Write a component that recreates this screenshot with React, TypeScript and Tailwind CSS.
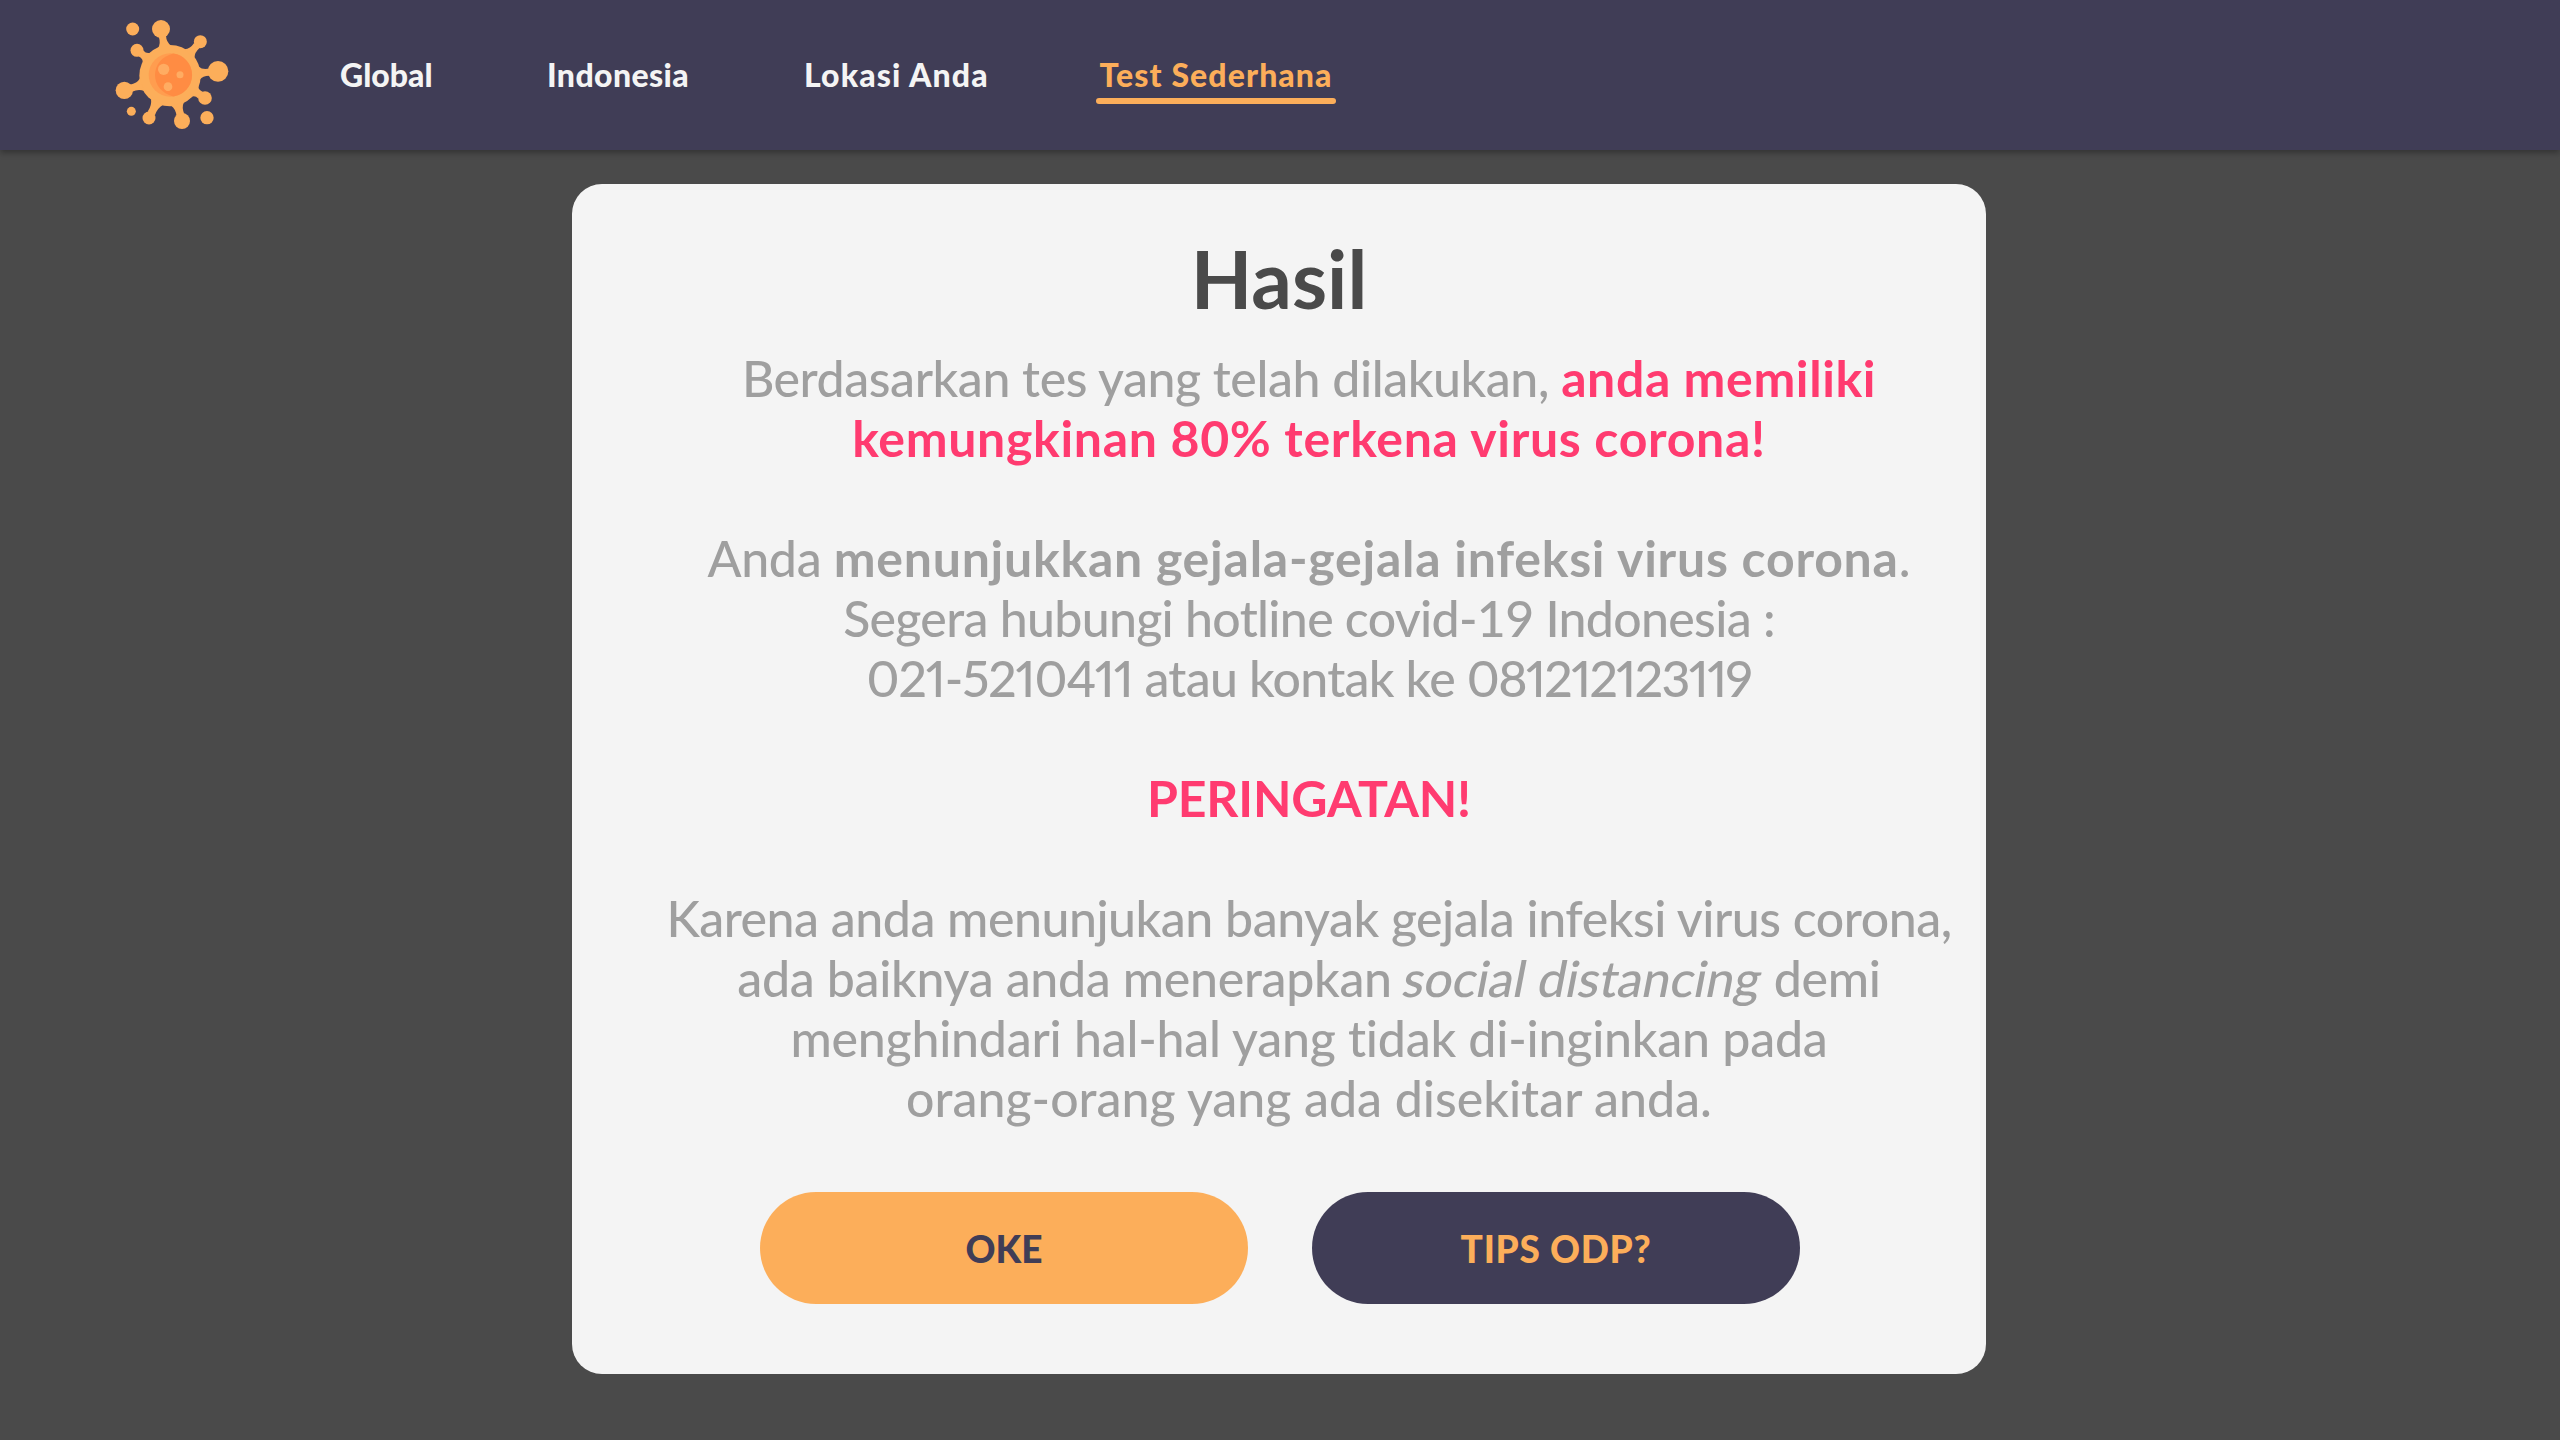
import type { ReactNode } from "react";

type Knob = { x: number; y: number; r: number; neck: number };

const BODY = { x: 210, y: 227, r: 92 };

const KNOBS: Knob[] = [
  { x: 183, y: 87, r: 27, neck: 9 },
  { x: 301, y: 125, r: 19.5, neck: 9 },
  { x: 354, y: 214, r: 31, neck: 9 },
  { x: 315, y: 294, r: 20.5, neck: 10 },
  { x: 246, y: 363, r: 24, neck: 10 },
  { x: 147, y: 354, r: 19.5, neck: 10 },
  { x: 73, y: 271, r: 26, neck: 9 },
  { x: 111, y: 151, r: 19.5, neck: 9 },
];

const DROPLETS = [
  { x: 98, y: 87, r: 19.5 },
  { x: 94, y: 334, r: 13.5 },
  { x: 321, y: 353, r: 20 },
];

// Concave neck joining the virus body to one of its knobs.
function neckPath({ x, y, r, neck }: Knob) {
  const dx = x - BODY.x;
  const dy = y - BODY.y;
  const len = Math.hypot(dx, dy);
  const ux = dx / len;
  const uy = dy / len;
  const at = (along: number, side: number) =>
    `${(BODY.x + ux * along - uy * side).toFixed(1)} ${(BODY.y + uy * along + ux * side).toFixed(1)}`;
  const foot = BODY.r - 4;
  const knob = len - r * 0.8;
  const mid = (BODY.r + len - r) / 2;
  return `M${at(foot, -20)} Q${at(mid - 4, -neck + 1)} ${at(knob, -neck - 2)} L${at(knob, neck + 2)} Q${at(mid - 4, neck - 1)} ${at(foot, 20)}Z`;
}

function VirusLogo() {
  return (
    <svg className="h-[150px] w-[160px] shrink-0" viewBox="0 0 480 450" aria-hidden="true">
      <g fill="#fcae5a">
        <circle cx={BODY.x} cy={BODY.y} r={BODY.r} />
        {KNOBS.map((k) => (
          <g key={`${k.x}-${k.y}`}>
            <path d={neckPath(k)} />
            <circle cx={k.x} cy={k.y} r={k.r} />
          </g>
        ))}
        {DROPLETS.map((d) => (
          <circle key={d.x} cx={d.x} cy={d.y} r={d.r} />
        ))}
      </g>
      <circle cx="211" cy="225" r="65" fill="#ff9d4f" />
      <path d="M220 160.600A65 65 0 0 1 220 289.400C184 280 165 254 165 225S184 170 220 160.600Z" fill="#ff8c43" />
      <g fill="#ffac62">
        <circle cx="191" cy="208" r="17" />
        <circle cx="240" cy="224" r="10.500" />
        <circle cx="204" cy="260" r="13" />
      </g>
    </svg>
  );
}

function Line({ children }: { children?: ReactNode }) {
  return <div className="flex h-[60px] justify-center whitespace-pre">{children}</div>;
}

export default function App() {
  return (
    <div className="flex h-[1440px] w-[2560px] flex-col overflow-hidden bg-[#4a4a4a] font-['Lato',sans-serif]">
      <header className="flex h-[150px] shrink-0 items-start bg-[#403d56] pl-[100px] shadow-[0_3px_6px_rgba(0,0,0,0.3)]">
        <VirusLogo />
        <nav className="flex pt-14 text-[32px] leading-[38px] font-black whitespace-nowrap text-[#f4f4f4]">
          <a className="ml-20 w-[207px]">Global</a>
          <a className="w-[257px] tracking-[0.4px]">Indonesia</a>
          <a className="w-[292px] tracking-[1.1px]">Lokasi Anda</a>
          <a className="flex w-[240px] flex-col items-center gap-1 text-[#fcae5a]">
            <span className="tracking-[1.1px]">Test Sederhana</span>
            <span className="h-1.5 w-full rounded-full bg-[#fcae5a]" />
          </a>
        </nav>
      </header>

      <main className="mt-[34px] ml-[572px] flex h-[1190px] w-[1414px] flex-col rounded-[30px] bg-[#f4f4f4] pt-[46px]">
        <h1 className="text-center text-[80px] leading-[96px] font-bold text-[#4a4a4a]">Hasil</h1>

        <div className="mt-[22px] pl-[60px] text-[50px] leading-[60px] font-medium text-[#9f9f9f] [font-variant-ligatures:none]">
          <Line>
            <span className="tracking-[-0.43px]">Berdasarkan tes yang telah dilakukan, </span>
            <b className="font-bold tracking-[0.6px] text-[#ff3b70]">anda memiliki</b>
          </Line>
          <Line>
            <b className="font-bold tracking-[0.68px] text-[#ff3b70]">kemungkinan 80% terkena virus corona!</b>
          </Line>
          <Line />
          <Line>
            <span className="tracking-[-0.3px]">Anda </span>
            <b className="font-bold tracking-[0.75px]">menunjukkan gejala-gejala infeksi virus corona</b>
            <span>.</span>
          </Line>
          <Line>
            <span className="tracking-[-0.68px]">Segera hubungi hotline covid-19 Indonesia :</span>
          </Line>
          <Line>
            <span className="tracking-[-1.1px] [font-feature-settings:'pnum']">021-5210411</span>
            <span className="tracking-[-0.75px]"> atau kontak ke </span>
            <span className="tracking-[-1.6px] [font-feature-settings:'pnum']">081212123119</span>
          </Line>
          <Line />
          <Line>
            <b className="font-bold tracking-[-0.2px] text-[#ff3b70]">PERINGATAN!</b>
          </Line>
          <Line />
          <Line>
            <span className="tracking-[-0.47px]">Karena anda menunjukan banyak gejala infeksi virus corona,</span>
          </Line>
          <Line>
            <span className="tracking-[-0.3px]">ada baiknya anda menerapkan </span>
            <em className="-skew-x-[11deg] not-italic tracking-[-0.1px]">social distancing</em>
            <span className="tracking-[-0.3px]"> demi</span>
          </Line>
          <Line>
            <span className="tracking-[-0.22px]">menghindari hal-hal yang tidak di-inginkan pada</span>
          </Line>
          <Line>
            <span>orang-orang yang ada disekitar anda.</span>
          </Line>
        </div>

        <div className="mt-16 ml-[188px] flex gap-16 text-[37px] font-black">
          <button className="h-28 w-[488px] rounded-full bg-[#fcae5a] pt-0.5 text-[#403d56]">OKE</button>
          <button className="h-28 w-[488px] rounded-full bg-[#403d56] pt-0.5 tracking-[0.7px] text-[#fcae5a]">TIPS ODP?</button>
        </div>
      </main>
    </div>
  );
}
